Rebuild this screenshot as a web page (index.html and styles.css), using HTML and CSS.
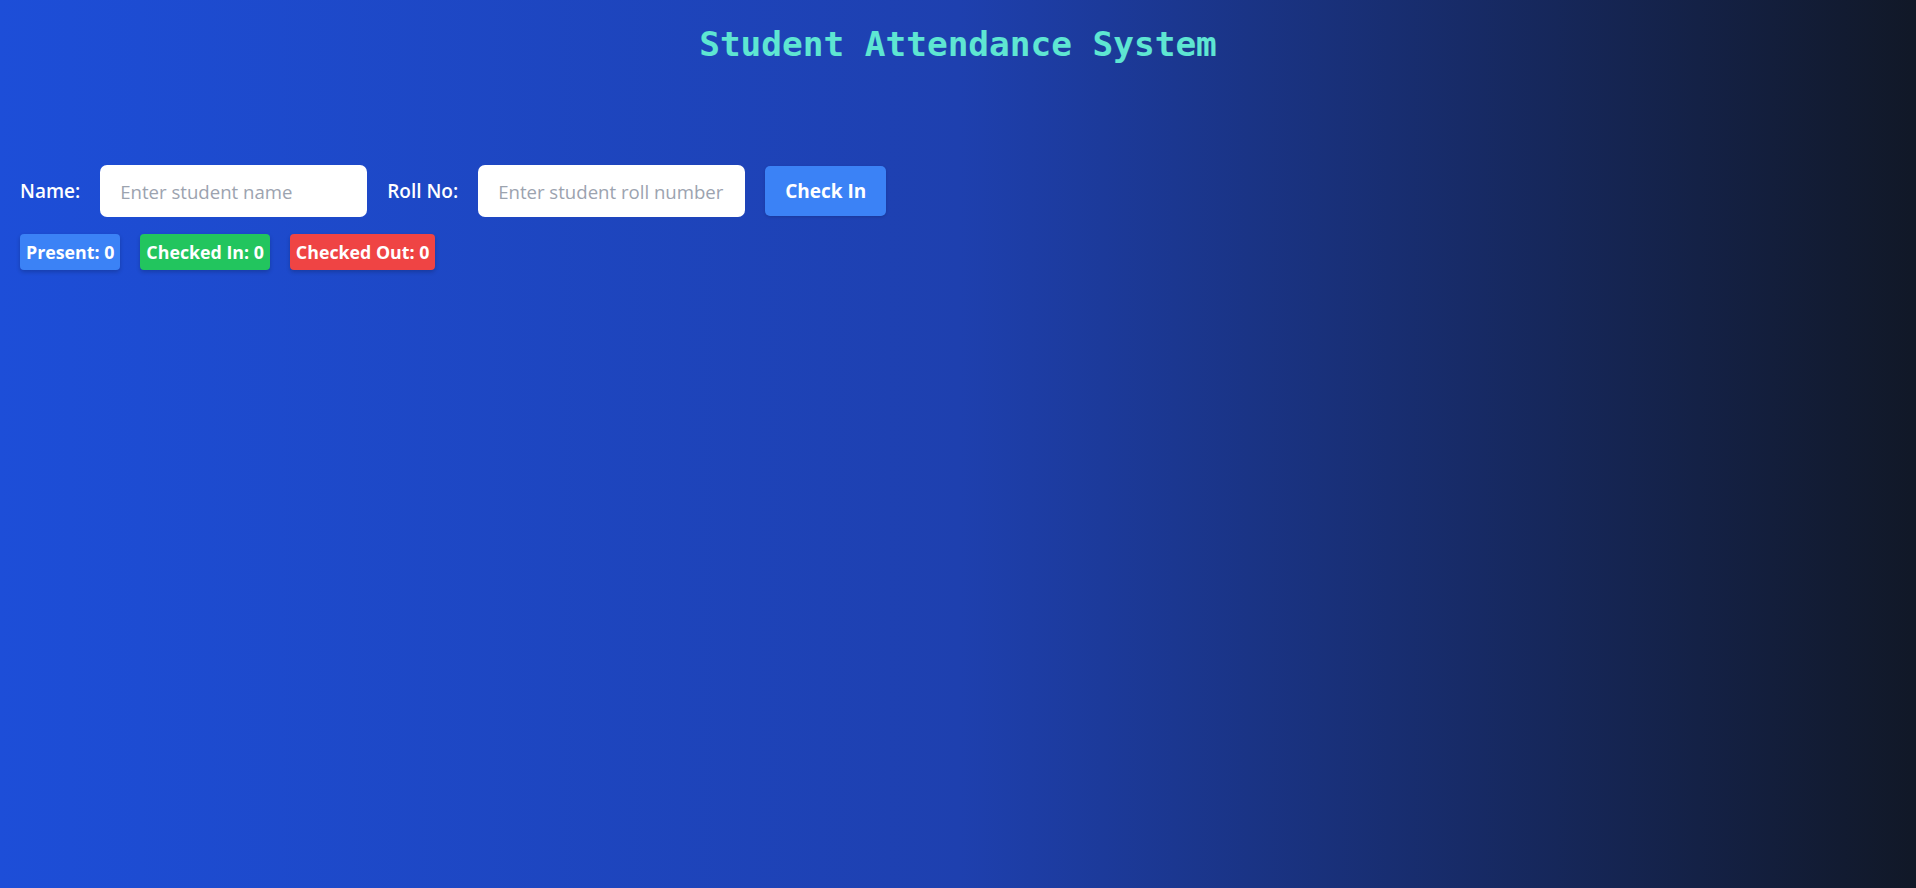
FILE: index.html
```html
<!DOCTYPE html>
<html lang="en">
<head>
<meta charset="utf-8">
<title>Student Attendance System</title>
<link rel="stylesheet" href="styles.css">
</head>
<body>
<div class="page">
  <h1 class="title">Student Attendance System</h1>
  <form class="form-row" onsubmit="return false;">
    <label class="label" for="name">Name:</label>
    <input class="field" id="name" type="text" placeholder="Enter student name">
    <label class="label" for="roll">Roll No:</label>
    <input class="field" id="roll" type="text" placeholder="Enter student roll number">
    <button class="btn" type="submit">Check In</button>
  </form>
  <div class="stats">
    <span class="badge badge-blue">Present: 0</span>
    <span class="badge badge-green">Checked In: 0</span>
    <span class="badge badge-red">Checked Out: 0</span>
  </div>
</div>
</body>
</html>
```

FILE: styles.css
```css
html, body {
  margin: 0;
  height: 100%;
}
body {
  background: linear-gradient(to right, #1d4ed8 0%, #1e40af 50%, #111827 100%);
  font-family: "Open Sans", "Noto Sans", sans-serif;
  color: #ffffff;
}
.page {
  padding: 24px 20px 20px 20px;
}
.title {
  margin: 0;
  text-align: center;
  font-family: "DejaVu Sans Mono", monospace;
  font-size: 34.4px;
  line-height: 40px;
  font-weight: bold;
  color: #5ee6d2;
}
.form-row {
  margin-top: 101px;
  display: flex;
  align-items: center;
  gap: 20px;
}
.label {
  font-size: 19px;
  font-weight: 600;
}
.field {
  box-sizing: border-box;
  width: 267px;
  height: 52px;
  border: none;
  border-radius: 7px;
  padding: 0 20px;
  font-family: "Open Sans", "Noto Sans", sans-serif;
  font-size: 18.6px;
  color: #111827;
  background: #fff;
  outline: none;
}
.field::placeholder {
  color: #9ca3af;
}
.btn {
  height: 50px;
  padding: 0 20px;
  border: none;
  border-radius: 5px;
  background: #3b82f6;
  color: #fff;
  font-family: "Open Sans", "Noto Sans", sans-serif;
  font-size: 19px;
  font-weight: 700;
  box-shadow: 0 1px 3px rgba(0,0,0,0.15);
}
.stats {
  margin-top: 17px;
  display: flex;
  gap: 20px;
}
.badge {
  height: 36px;
  display: flex;
  align-items: center;
  padding: 0 6px;
  border-radius: 4px;
  font-size: 17.8px;
  font-weight: 700;
  box-shadow: 0 2px 4px rgba(0,0,0,0.2);
}
.badge-blue { background: #3b82f6; }
.badge-green { background: #22c55e; }
.badge-red { background: #ef4444; }
```
